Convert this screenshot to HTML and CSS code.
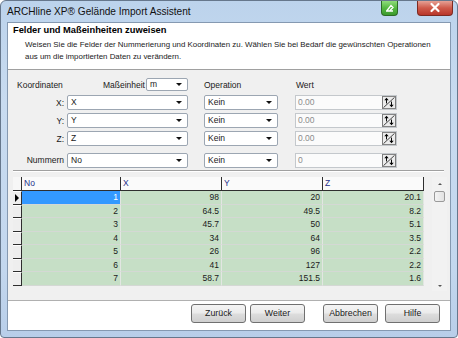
FILE: index.html
```html
<html lang="de">

<head>
    <meta charset="utf-8" />
    <title>Gelände Import Assistent</title>
    <link rel="stylesheet" href="styles.css">
</head>

<body>

<div class="fenster">

    <div class="titel">
        <span class="titel-text">ARCHline XP® Gelände Import Assistent</span>
        <span class="knopf-min">
            <svg width="17" height="15" viewBox="0 0 17 15">
                <path d="M5 11 L12 11 M6 10.5 L10 5.5 L12 7.5 L9 10.5" stroke="#fff" stroke-width="1.3" fill="none" />
            </svg>
        </span>
        <span class="knopf-zu">
            <svg width="36" height="15" viewBox="0 0 36 15">
                <path d="M14.5 4 L21.5 11 M21.5 4 L14.5 11" stroke="#fff" stroke-width="2.2" stroke-linecap="round" />
            </svg>
        </span>
    </div>

    <div class="client">

        <div class="kopf">
            <h1>Felder und Maßeinheiten zuweisen</h1>
            <p>Weisen Sie die Felder der Nummerierung und Koordinaten zu. Wählen Sie bei Bedarf die gewünschten Operationen<br>aus um die importierten Daten zu verändern.</p>
        </div>

        <div class="inhalt">

            <div class="formular">
                <!-- ligne des titres -->
                <span class="titre-koord">Koordinaten</span>
                <span class="masseinheit">Maßeinheit <span class="combo klein">m</span></span>
                <span class="titre op">Operation</span>
                <span class="titre wert-titre">Wert</span>

                <span class="label">X:</span>
                <span class="combo">X</span>
                <span class="combo op">Kein</span>
                <span class="wert">0.00
                    <svg class="spin" width="14" height="13" viewBox="0 0 14 14" preserveAspectRatio="none">
                        <rect x="0.5" y="0.5" width="13" height="13" fill="#ececec" stroke="#7c7c7c" />
                        <path d="M1.5 12.5 L12.5 1.5" stroke="#3a3a3a" />
                        <path d="M4.5 3.5 V8 M9.5 6 V10.5" stroke="#000" />
                        <path d="M2.3 4.6 L4.5 1.8 L6.7 4.6 Z M7.3 9.4 L9.5 12.2 L11.7 9.4 Z" fill="#000" />
                    </svg>
                </span>

                <span class="label">Y:</span>
                <span class="combo">Y</span>
                <span class="combo op">Kein</span>
                <span class="wert">0.00
                    <svg class="spin" width="14" height="13" viewBox="0 0 14 14" preserveAspectRatio="none">
                        <rect x="0.5" y="0.5" width="13" height="13" fill="#ececec" stroke="#7c7c7c" />
                        <path d="M1.5 12.5 L12.5 1.5" stroke="#3a3a3a" />
                        <path d="M4.5 3.5 V8 M9.5 6 V10.5" stroke="#000" />
                        <path d="M2.3 4.6 L4.5 1.8 L6.7 4.6 Z M7.3 9.4 L9.5 12.2 L11.7 9.4 Z" fill="#000" />
                    </svg>
                </span>

                <span class="label">Z:</span>
                <span class="combo">Z</span>
                <span class="combo op">Kein</span>
                <span class="wert">0.00
                    <svg class="spin" width="14" height="13" viewBox="0 0 14 14" preserveAspectRatio="none">
                        <rect x="0.5" y="0.5" width="13" height="13" fill="#ececec" stroke="#7c7c7c" />
                        <path d="M1.5 12.5 L12.5 1.5" stroke="#3a3a3a" />
                        <path d="M4.5 3.5 V8 M9.5 6 V10.5" stroke="#000" />
                        <path d="M2.3 4.6 L4.5 1.8 L6.7 4.6 Z M7.3 9.4 L9.5 12.2 L11.7 9.4 Z" fill="#000" />
                    </svg>
                </span>

                <span class="label abstand">Nummern</span>
                <span class="combo abstand">No</span>
                <span class="combo op abstand">Kein</span>
                <span class="wert abstand">0
                    <svg class="spin" width="14" height="13" viewBox="0 0 14 14" preserveAspectRatio="none">
                        <rect x="0.5" y="0.5" width="13" height="13" fill="#ececec" stroke="#7c7c7c" />
                        <path d="M1.5 12.5 L12.5 1.5" stroke="#3a3a3a" />
                        <path d="M4.5 3.5 V8 M9.5 6 V10.5" stroke="#000" />
                        <path d="M2.3 4.6 L4.5 1.8 L6.7 4.6 Z M7.3 9.4 L9.5 12.2 L11.7 9.4 Z" fill="#000" />
                    </svg>
                </span>
            </div>

            <div class="trenner"></div>

            <div class="tabelle">
                <div class="raster">
                    <div class="ecke"></div>
                    <div class="kopfzelle">No</div>
                    <div class="kopfzelle">X</div>
                    <div class="kopfzelle">Y</div>
                    <div class="kopfzelle">Z</div>

                    <div class="zeiger aktiv-zeile"></div>
                    <div class="zelle aktiv">1</div><div class="zelle">98</div><div class="zelle">20</div><div class="zelle">20.1</div>

                    <div class="zeiger"></div>
                    <div class="zelle">2</div><div class="zelle">64.5</div><div class="zelle">49.5</div><div class="zelle">8.2</div>

                    <div class="zeiger"></div>
                    <div class="zelle">3</div><div class="zelle">45.7</div><div class="zelle">50</div><div class="zelle">5.1</div>

                    <div class="zeiger"></div>
                    <div class="zelle">4</div><div class="zelle">34</div><div class="zelle">64</div><div class="zelle">3.5</div>

                    <div class="zeiger"></div>
                    <div class="zelle">5</div><div class="zelle">26</div><div class="zelle">96</div><div class="zelle">2.2</div>

                    <div class="zeiger"></div>
                    <div class="zelle">6</div><div class="zelle">41</div><div class="zelle">127</div><div class="zelle">2.2</div>

                    <div class="zeiger"></div>
                    <div class="zelle">7</div><div class="zelle">58.7</div><div class="zelle">151.5</div><div class="zelle">1.6</div>
                </div>

                <div class="rollbalken">
                    <span class="pfeil-hoch"></span>
                    <span class="schieber"></span>
                    <span class="pfeil-runter"></span>
                </div>
            </div>

        </div>

        <div class="fuss">
            <span class="bouton">Zurück</span>
            <span class="bouton">Weiter</span>
            <span class="bouton weit">Abbrechen</span>
            <span class="bouton">Hilfe</span>
        </div>

    </div>

</div>

</body>
</html>
```

FILE: styles.css
```css
body {
    margin: 0;
    font-family: "Liberation Sans", Arial, sans-serif;
    font-size: 8.5px;
    color: #1a1a1a;
}

div.fenster {
    box-sizing: border-box;
    width: 458px;
    height: 338px;
    border: 1px solid #66778c;
    border-radius: 6px 6px 4px 4px;
    background: linear-gradient(#bcd3ec, #c8dbf0 30%, #c3d7ee 80%, #b8cee9);
    display: flex;
    flex-direction: column;
}

/* barre de titre */

div.titel {
    height: 21px;
    display: flex;
    align-items: flex-start;
    padding-right: 4px;
}

span.titel-text {
    font-size: 10.1px;
    color: #111;
    padding: 5px 0 0 6px;
    flex: 1;
}

span.knopf-min, span.knopf-zu {
    display: block;
    height: 15px;
    box-sizing: border-box;
    border: 1px solid;
    border-top: none;
    border-radius: 0 0 4px 4px;
}

span.knopf-min {
    width: 17px;
    margin-right: 19px;
    border-color: #2c6b25;
    background: linear-gradient(#8fdc7c, #55b941 50%, #3c9a2e);
}

span.knopf-zu {
    width: 36px;
    border-color: #7d2a22;
    background: linear-gradient(#e6a195, #cf5a4a 50%, #b8362a);
}

span.knopf-min svg, span.knopf-zu svg {
    display: block;
    margin: -1px;
}

/* zone cliente */

div.client {
    flex: 1;
    margin: 0 6px 6px 6px;
    border: 1px solid #8599b1;
    background: #f0f0f0;
    display: flex;
    flex-direction: column;
}

div.kopf {
    height: 45px;
    background: white;
    border-bottom: 1px solid #a0a0a0;
    padding: 1px 0 0 5px;
}

div.kopf h1 {
    margin: 0;
    font-size: 9.3px;
    line-height: 12px;
    font-weight: bold;
    color: #000;
}

div.kopf p {
    margin: 3px 0 0 12px;
    line-height: 12px;
    font-size: 7.9px;
    white-space: nowrap;
}

div.inhalt {
    flex: 1;
    padding-top: 7px;
}

/* formulaire */

div.formular {
    display: grid;
    grid-template-columns: 59px 121px 90px 119px;
    grid-template-rows: 15px 15px 15px 15px 15px;
    row-gap: 3px;
    align-items: center;
}

span.titre-koord {
    padding-left: 9px;
}

span.masseinheit {
    display: flex;
    justify-content: flex-end;
    align-items: center;
    gap: 1px;
}

.op {
    margin-left: 16px;
}

span.wert-titre {
    margin-left: 18px;
}

span.label {
    text-align: right;
    padding-right: 3px;
}

span.combo {
    position: relative;
    box-sizing: border-box;
    height: 15px;
    line-height: 13px;
    padding-left: 3px;
    border: 1px solid #9ca6b2;
    border-radius: 2px;
    background: white;
}

span.combo::after {
    content: "";
    position: absolute;
    right: 5px;
    top: 5px;
    border-left: 3px solid transparent;
    border-right: 3px solid transparent;
    border-top: 3px solid #111;
}

span.combo.klein {
    width: 42px;
    height: 13px;
    line-height: 11px;
}

span.combo.klein::after {
    top: 4px;
}

span.wert {
    position: relative;
    box-sizing: border-box;
    margin-left: 17px;
    height: 15px;
    line-height: 13px;
    padding-left: 2px;
    border: 1px solid #c4c8cc;
    background: #fbfbfb;
    color: #8c8c8c;
}

svg.spin {
    position: absolute;
    right: 0;
    top: 0;
}

.abstand {
    margin-top: 7px;
}

div.trenner {
    margin: 6px 6px 0 5px;
    border-top: 1px solid #a0a0a0;
    border-bottom: 1px solid #fff;
}

/* tableau */

div.tabelle {
    display: flex;
    margin: 5px 0 0 5px;
    height: 114px;
}

div.raster {
    display: grid;
    grid-template-columns: 9px 99px 101px 101px 101px;
    grid-template-rows: 14px repeat(7, 13.5px);
    align-self: flex-start;
}

div.ecke {
    background: #f7f7f7;
    border-right: 1px solid #2e2e2e;
    border-bottom: 1px solid #2e2e2e;
}

div.kopfzelle {
    background: #fafafa;
    border-right: 1px solid #2e2e2e;
    border-bottom: 1px solid #2e2e2e;
    color: #26308a;
    padding-left: 2px;
    line-height: 13px;
}

div.zeiger {
    position: relative;
    background: #eeeeee;
    border-top: 1px solid #fff;
    border-right: 1px solid #2e2e2e;
    border-bottom: 1px solid #2e2e2e;
}

div.zeiger.aktiv-zeile::after {
    content: "";
    position: absolute;
    left: 2px;
    top: 2px;
    border-top: 4px solid transparent;
    border-bottom: 4px solid transparent;
    border-left: 4px solid #000;
}

div.zelle {
    background: #c6dfc6;
    border-right: 1px solid #e2e6e2;
    border-bottom: 1px solid #d4d8d4;
    text-align: right;
    padding-right: 2px;
    line-height: 12.5px;
}

div.zelle.aktiv {
    background: #3399ff;
    color: white;
}

div.rollbalken {
    margin-left: 8px;
    width: 15px;
    display: flex;
    flex-direction: column;
    align-items: center;
    background: #f2f2f2;
}

span.pfeil-hoch, span.pfeil-runter {
    display: block;
    border-left: 2px solid transparent;
    border-right: 2px solid transparent;
}

span.pfeil-hoch {
    margin-top: 6px;
    border-bottom: 2px solid #555;
}

span.pfeil-runter {
    margin-top: auto;
    margin-bottom: 4px;
    border-top: 2px solid #555;
}

span.schieber {
    margin-top: 6px;
    width: 11px;
    height: 11px;
    box-sizing: border-box;
    border: 1px solid #9a9a9a;
    border-radius: 2px;
    background: linear-gradient(to right, #f4f4f4, #e2e2e2);
}

/* boutons */

div.fuss {
    height: 26px;
    background: white;
    border-top: 1px solid #b0b0b0;
    display: flex;
    justify-content: flex-end;
    align-items: flex-start;
    padding: 3px 10px 0 0;
    font-size: 8.8px;
}

span.bouton {
    box-sizing: border-box;
    width: 55px;
    height: 19px;
    line-height: 17px;
    text-align: center;
    border: 1px solid #707070;
    border-radius: 3px;
    background: linear-gradient(#f4f4f4, #ebebeb 48%, #dddddd 52%, #cfcfcf);
    margin-left: 4px;
}

span.bouton.weit {
    margin-left: 18px;
    margin-right: 3px;
}
```
